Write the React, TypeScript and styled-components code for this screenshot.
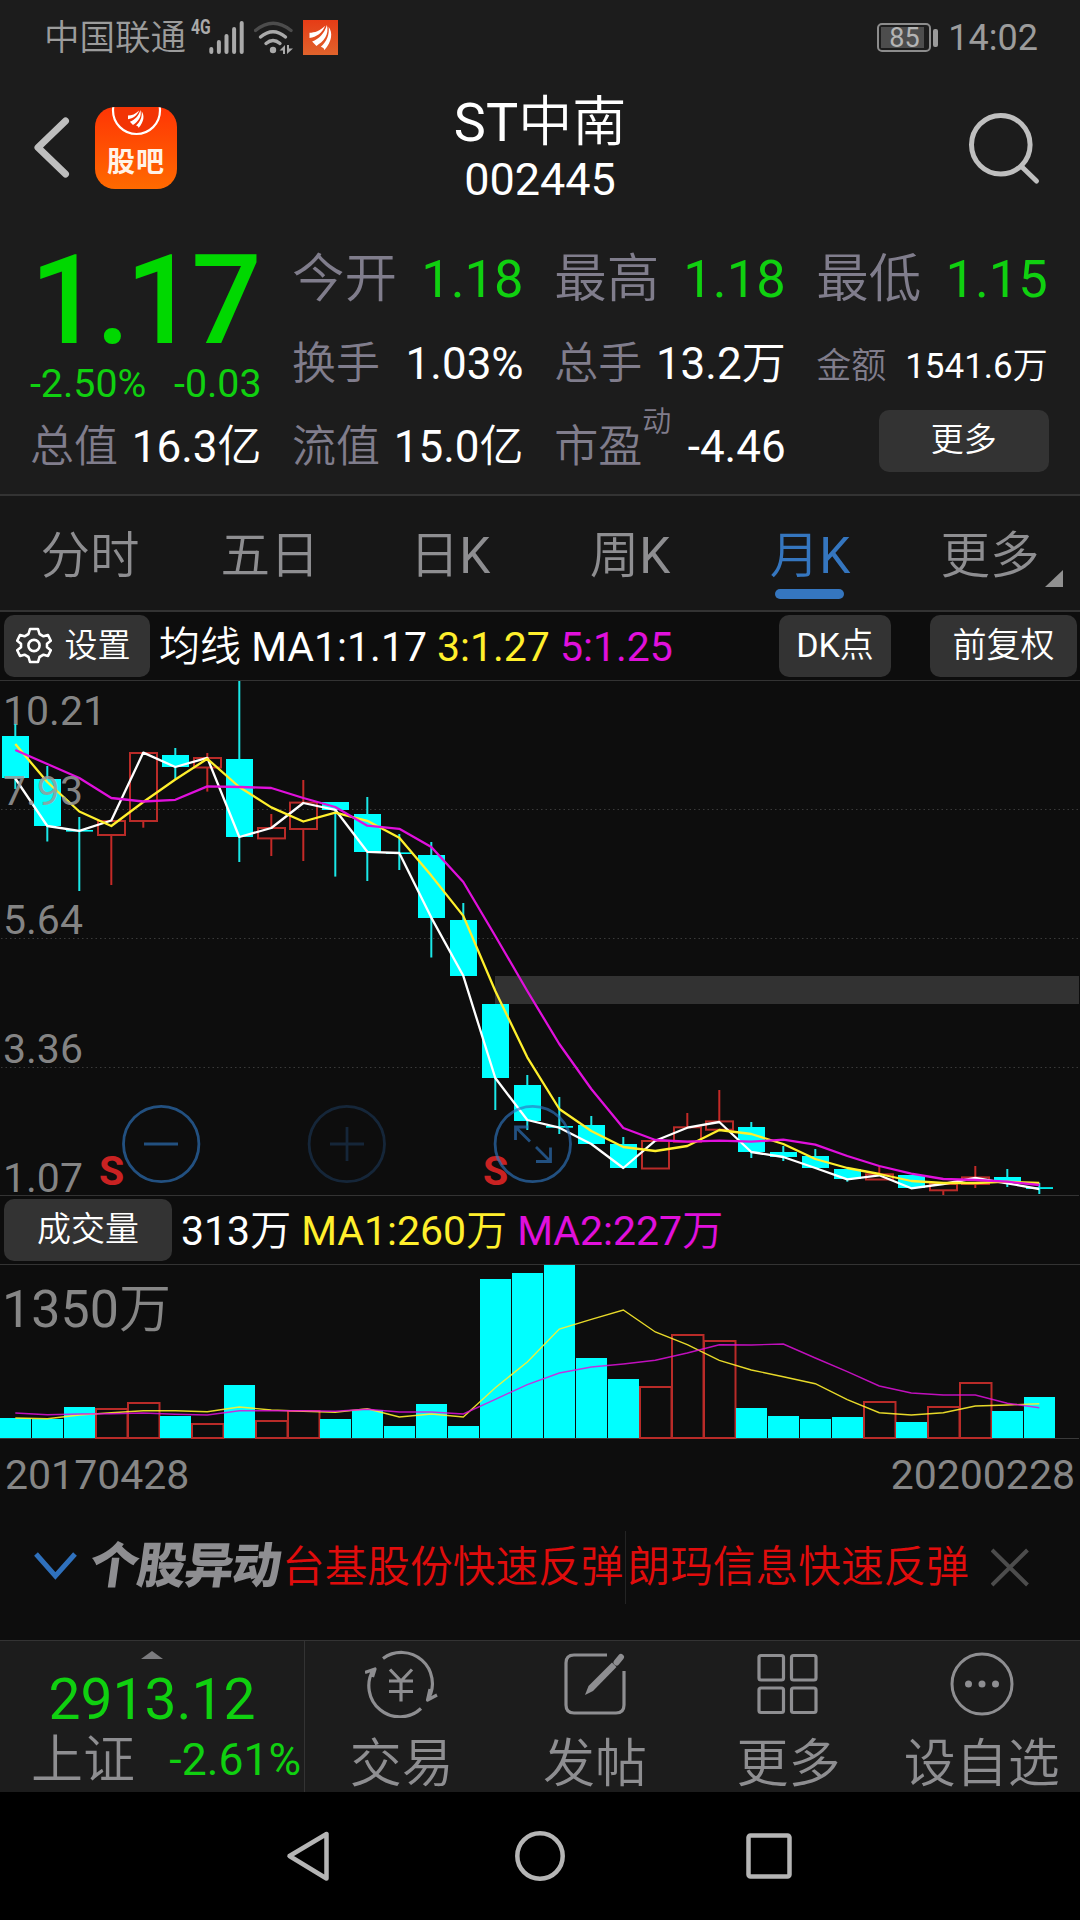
import React from "react";
import styled, { createGlobalStyle } from "styled-components";

const GlobalStyle = createGlobalStyle`
  html, body { margin: 0; padding: 0; background: #000; }
  body { width: 1080px; overflow-x: hidden; }
  * { box-sizing: border-box; }
  svg { display: block; flex: none; }
`;

const color = {
  panel: "#1c1c1c",
  tabs: "#171717",
  chart: "#0d0d0d",
  line: "#333333",
  button: "#333333",
  label: "#807d8c",
  muted: "#8e8e91",
  green: "#10d010",
  price: "#00d800",
  blue: "#3576bf",
  cyan: "#00ffff",
  red: "#b92b28",
  yellow: "#ffef2c",
  magenta: "#e010dc",
};

const Page = styled.main`
  width: 1080px;
  height: 1920px;
  display: flex;
  flex-direction: column;
  overflow: hidden;
  background: ${color.chart};
  color: #fff;
  font-family: Roboto, "Noto Sans CJK SC", sans-serif;
  white-space: nowrap;
`;

const Han = styled.span`
  font-weight: 350;
`;

/* ---------- status bar ---------- */

const StatusBar = styled.header`
  height: 75px;
  padding: 0 42px 0 44px;
  display: flex;
  align-items: center;
  background: ${color.panel};
  color: #9c9c9c;
`;

const Carrier = styled(Han)`
  width: 147px;
  font-size: 35.5px;
  line-height: 73px;
  padding-top: 2px;
`;

const Network = styled.span`
  align-self: flex-start;
  width: 17px;
  margin-top: 16px;
  font: 700 20px/22px Roboto, sans-serif;
  transform: scaleX(0.78);
  transform-origin: 0 0;
  color: #aaa;
`;

const StatusIcons = styled.div`
  display: flex;
  gap: 9px;
  margin-left: 1px;
`;

const Battery = styled.div`
  display: flex;
  align-items: center;
  gap: 2px;
  margin-left: auto;
`;

const BatteryCase = styled.div`
  width: 54px;
  height: 29px;
  padding: 2px;
  border: 2px solid #8c8c8c;
  border-radius: 5px;
`;

const BatteryLevel = styled.div`
  width: 43px;
  height: 21px;
  padding-left: 8px;
  background: #4d4d4d;
  color: #b4b4b4;
  font-size: 27px;
  line-height: 22px;
`;

const BatteryTip = styled.div`
  width: 5px;
  height: 18px;
  border-radius: 2px;
  background: #9a9a9a;
`;

const Clock = styled.time`
  margin-left: 10px;
  font-size: 36px;
  line-height: 73px;
  padding-top: 2px;
`;

/* ---------- title bar ---------- */

const TitleBar = styled.section`
  height: 150px;
  padding: 15px 36px 0 33px;
  display: grid;
  grid-template-columns: 200px 1fr 200px;
  align-items: start;
  background: ${color.panel};
`;

const TitleLeft = styled.div`
  display: flex;
  align-items: flex-start;
  gap: 24px;
  padding-top: 17px;
`;

const GubaBadge = styled.div`
  width: 82px;
  height: 82px;
  border-radius: 20px;
  overflow: hidden;
  display: flex;
  flex-direction: column;
  align-items: center;
  background: linear-gradient(#ff3505, #ff6a00);
`;

const GubaText = styled.span`
  margin-top: 7px;
  font-size: 28px;
  font-weight: 700;
  line-height: 34px;
  letter-spacing: 1px;
  color: #fff3e8;
`;

const TitleText = styled.div`
  display: flex;
  flex-direction: column;
  align-items: center;
  padding: 1px 0 0 3px;
`;

const StockName = styled.h1`
  margin: 0;
  font-size: 54px;
  font-weight: 400;
  line-height: 64px;
`;

const StockCode = styled.div`
  font-size: 45px;
  line-height: 50px;
`;

const SearchSlot = styled.div`
  display: flex;
  justify-content: flex-end;
  padding: 20px 3px 0 0;
`;

/* ---------- quote ---------- */

const Quote = styled.section`
  height: 271px;
  padding: 15px 32px 0 30px;
  display: grid;
  grid-template-columns: repeat(4, 231.5px);
  grid-template-rows: 82px 83px 80px;
  column-gap: 30.6px;
  background: ${color.panel};
  border-bottom: 2px solid ${color.line};
`;

const PriceCell = styled.div`
  grid-row: span 2;
  display: flex;
  flex-direction: column;
`;

const Price = styled.div`
  height: 116px;
  font-size: 124px;
  font-weight: 500;
  line-height: 122px;
  letter-spacing: -4.7px;
  color: ${color.price};
`;

const Change = styled.div`
  display: flex;
  justify-content: space-between;
  font-size: 39.3px;
  line-height: 56px;
  color: ${color.green};
`;

const Stat = styled.div<{ $size: number }>`
  display: flex;
  justify-content: space-between;
  font-size: ${(p) => p.$size}px;
  line-height: ${(p) => (p.$size === 35 ? 90 : p.$size > 50 ? 78 : 84)}px;
`;

const StatLabel = styled(Han)`
  color: ${color.label};
`;

const StatNote = styled.sup`
  font-size: 29px;
  line-height: 0;
  vertical-align: 30px;
`;

const StatValue = styled.span<{ $green?: boolean }>`
  color: ${(p) => (p.$green ? color.green : "#fff")};
`;

const MoreButton = styled.button`
  justify-self: end;
  width: 170px;
  height: 62px;
  margin: 5px -1px 0 0;
  padding: 0 0 2px;
  border: 0;
  border-radius: 10px;
  background: ${color.button};
  color: #fff;
  font: 350 33px/60px Roboto, "Noto Sans CJK SC", sans-serif;
`;

/* ---------- period tabs ---------- */

const Tabs = styled.nav`
  height: 116px;
  display: grid;
  grid-template-columns: repeat(6, 180px);
  background: ${color.tabs};
  border-bottom: 2px solid ${color.line};
`;

const Tab = styled.div<{ $active?: boolean }>`
  position: relative;
  display: flex;
  justify-content: center;
  font-size: 49.5px;
  line-height: 121px;
  color: ${(p) => (p.$active ? color.blue : color.muted)};
  &::after {
    content: "";
    display: ${(p) => (p.$active ? "block" : "none")};
    position: absolute;
    left: 55px;
    top: 93px;
    width: 69px;
    height: 10px;
    border-radius: 5px;
    background: ${color.blue};
  }
`;

const TabCorner = styled.i`
  position: absolute;
  right: 17px;
  top: 74px;
  border-left: 18px solid transparent;
  border-bottom: 17px solid #919191;
`;

/* ---------- indicator rows ---------- */

const IndicatorRow = styled.div`
  height: 69px;
  padding: 0 3px 0 4px;
  display: flex;
  align-items: center;
  border-bottom: 1px solid ${color.line};
  font-size: 41px;
`;

const Chip = styled.button<{ $w: number; $ml?: number }>`
  width: ${(p) => p.$w}px;
  height: 62px;
  margin-left: ${(p) => p.$ml ?? 0}px;
  padding: 0 0 1px;
  display: flex;
  align-items: center;
  justify-content: center;
  flex: none;
  border: 0;
  border-radius: 10px;
  background: ${color.button};
  color: #fff;
  font: 400 34px/61px Roboto, "Noto Sans CJK SC", sans-serif;
`;

const SettingsChip = styled(Chip)`
  justify-content: flex-start;
  gap: 12.5px;
  padding-left: 12px;
  font-size: 33px;
`;

const Legend = styled.div`
  display: flex;
  gap: 10px;
  margin-left: 9px;
  line-height: 68px;
  padding-top: 2px;
`;

const LegendItem = styled.span<{ $c?: string }>`
  color: ${(p) => p.$c ?? "#fff"};
`;

const Spacer = styled.div`
  flex: 1;
`;

const Dates = styled.div`
  height: 72px;
  padding: 0 5px 0 5px;
  display: flex;
  justify-content: space-between;
  font-size: 41px;
  line-height: 72px;
  color: #868686;
`;

/* ---------- ticker ---------- */

const Ticker = styled.section`
  height: 129px;
  padding: 20px 51px 0 33px;
  display: flex;
  align-items: flex-start;
`;

const TickerChevron = styled.div`
  padding-top: 18px;
`;

const TickerLogo = styled.span`
  width: 205px;
  padding-left: 13px;
  font-size: 49px;
  font-weight: 900;
  line-height: 72px;
  letter-spacing: -1.5px;
  color: ${color.muted};
  transform: skewX(-8deg);
`;

const TickerItem = styled(Han)`
  font-size: 42.7px;
  line-height: 73px;
  color: #e00c0c;
  & + & {
    margin-left: 1px;
    padding-left: 2px;
    border-left: 1px solid #242424;
  }
`;

const TickerClose = styled.div`
  margin-left: auto;
  padding-top: 16px;
`;

/* ---------- footer ---------- */

const Footer = styled.footer`
  height: 152px;
  display: grid;
  grid-template-columns: 305px repeat(4, 193.4px);
  background: ${color.panel};
  border-top: 1px solid ${color.line};
`;

const IndexCell = styled.div`
  display: flex;
  flex-direction: column;
  align-items: center;
  padding-top: 10px;
  border-right: 1px solid ${color.line};
`;

const UpMark = styled.i`
  border: 11px solid transparent;
  border-top: 0;
  border-bottom: 8px solid #7b7b7e;
`;

const IndexValue = styled.div`
  font-size: 57px;
  line-height: 82px;
  color: ${color.green};
`;

const IndexRow = styled.div`
  align-self: stretch;
  display: flex;
  justify-content: space-between;
  padding: 0 3px 0 31px;
  line-height: 38px;
  font-size: 44.5px;
  color: ${color.green};
`;

const IndexName = styled(Han)`
  padding-top: 1px;
  font-size: 52px;
  color: ${color.muted};
`;

const Action = styled.div`
  display: flex;
  flex-direction: column;
  align-items: center;
  padding-top: 9px;
`;

const ActionText = styled(Han)`
  font-size: 52px;
  line-height: 84px;
  padding-top: 5px;
  color: ${color.muted};
`;

const SystemNav = styled.nav`
  height: 128px;
  padding: 0 285px 0 284px;
  display: flex;
  align-items: center;
  justify-content: space-between;
  background: #000;
`;

const HomeButton = styled.div`
  padding-left: 6px;
`;

/* ---------- data ---------- */

type Candle = [up: 0 | 1, high: number, top: number, bottom: number, low: number];

const candles: Candle[] = [
  [0, 724, 736, 778, 789], [0, 766, 779, 826, 841.5], [0, 817, 830, 831.6, 891],
  [1, 820.5, 821, 835, 885], [1, 753, 753, 821, 827.7], [0, 748, 755, 767, 779.5],
  [1, 753, 758, 767.5, 791.6], [0, 680, 759, 837, 862], [1, 814, 828, 838.4, 856],
  [1, 780, 802.6, 829, 861], [0, 802, 802, 810, 876.6], [0, 797, 814, 852, 881],
  [0, 834, 852.4, 854, 870], [0, 842, 855, 918, 957.5], [0, 903, 920, 976, 976],
  [0, 1004, 1004, 1078, 1110], [0, 1075, 1085, 1121, 1130], [0, 1097, 1126, 1127.7, 1134],
  [0, 1116, 1125, 1144, 1144], [0, 1137, 1144, 1168, 1168], [1, 1141, 1141, 1168.5, 1168.5],
  [1, 1113, 1127.3, 1141.7, 1141.7], [1, 1090, 1121.4, 1129.7, 1129.7], [0, 1122, 1127, 1152, 1158],
  [0, 1146, 1152, 1157, 1161], [0, 1149, 1156, 1168, 1168], [0, 1169, 1169, 1179, 1181.7],
  [1, 1166.7, 1174.3, 1179.5, 1180], [0, 1175, 1175, 1188, 1188], [1, 1184, 1184, 1190.3, 1195],
  [1, 1166, 1177.4, 1184, 1188], [0, 1169, 1177, 1182, 1187], [0, 1183, 1187.2, 1188.9, 1194],
];

const ma1 = [778.5, 826, 830.8, 820.5, 752.6, 767, 757.8, 837, 828, 803, 809.8, 851.8, 853, 917.6, 975.8, 1078, 1120, 1127.7, 1144, 1168, 1140.7, 1127.7, 1122, 1152, 1157, 1168, 1179.3, 1175.3, 1188.3, 1184, 1178, 1183.3, 1189];
const ma3 = [744, 782, 811.5, 826, 802, 779.5, 758.8, 787, 807.4, 821.5, 812.6, 820.8, 837.7, 875.6, 915.9, 991, 1057.3, 1109, 1131, 1147, 1151, 1146, 1130, 1134, 1144, 1159, 1168, 1174, 1181, 1183, 1183, 1181.7, 1183];
const ma5 = [750, 764, 778, 798, 801.5, 799.8, 786.4, 787, 788, 798, 807, 825.7, 828.8, 847, 882, 936, 991, 1044, 1089, 1128, 1140, 1141.7, 1140.7, 1141.7, 1139.7, 1144.7, 1156, 1166, 1173.7, 1179, 1180, 1181.7, 1185];

const volumeTops = [1418, 1419, 1407, 1409, 1403, 1416, 1424, 1385, 1421, 1411, 1419, 1410, 1426, 1404, 1426, 1279, 1273, 1264, 1358, 1379, 1387, 1335, 1341, 1408, 1416, 1419, 1417, 1402, 1422, 1407, 1383, 1411, 1397];
const volumeMa1 = [1418, 1418.7, 1415, 1412.7, 1410.7, 1410.7, 1411.7, 1407, 1410, 1411.3, 1412.3, 1408.7, 1417, 1414, 1417, 1387.7, 1362, 1329, 1319.3, 1310, 1332, 1344.7, 1360.3, 1370, 1376.7, 1383.7, 1399.7, 1412.7, 1415, 1412.7, 1406, 1405, 1403.7];
const volumeMa2 = [1413, 1414.7, 1414, 1413.7, 1413, 1414.3, 1415, 1410.7, 1410.7, 1410.7, 1411.3, 1409.3, 1412, 1412, 1414, 1399.3, 1384.7, 1373, 1367, 1364, 1360.3, 1353, 1344.7, 1345, 1344, 1358, 1371.7, 1386, 1393, 1395, 1395, 1403.3, 1407.7];

const axis: [string, number][] = [["10.21", 725], ["7.93", 804.5], ["5.64", 934], ["3.36", 1063], ["1.07", 1192]];

const centerX = (i: number) => 15.3 + 32 * i;
const toPoints = (ys: number[]) => ys.map((y, i) => `${centerX(i)},${y}`).join(" ");

/* ---------- drawings ---------- */

const Wing = () => (
  <g fill="#fff">
    <path d="M0 9C6 9 12 7 18 1C15 9 8 14 0 15Z" />
    <path d="M3 19C11 16 17 10 20 0C23 11 16 19 8 24Z" />
    <path d="M13 25C20 19 23 11 22 2C27 9 26 19 17 29C17 27 16 26 13 25Z" />
  </g>
);

const Signal = () => (
  <svg width="36" height="36" viewBox="210 18 36 36">
    <g stroke="#aaaaaa" strokeWidth="4" strokeLinecap="round">
      {[47, 40, 34, 27, 21].map((y, i) => (
        <line key={y} x1={212.3 + i * 7.6} x2={212.3 + i * 7.6} y1={y} y2="50" />
      ))}
    </g>
  </svg>
);

const Wifi = () => (
  <svg width="40" height="36" viewBox="255 18 40 36" fill="none" strokeWidth="3.4" strokeLinecap="round">
    <path d="M256.5 28.5Q274 14 292 28.5" stroke="#4c4c4c" />
    <path d="M261.5 35Q274 24.5 286.5 35" stroke="#aaa" />
    <path d="M267 41.5Q274 35.5 281 41.5" stroke="#aaa" />
    <circle cx="274" cy="48" r="3.2" fill="#aaa" />
    <path d="M280.5 48.5L286 43V52H284V48.5ZM288 43H290V46.5H294L288 52Z" fill="#aaa" />
  </svg>
);

const AppIcon = () => (
  <svg width="35" height="35" viewBox="0 0 35 35">
    <defs>
      <linearGradient id="appFill" x1="0" y1="0" x2="0" y2="1">
        <stop offset="0" stopColor="#e63c16" />
        <stop offset="1" stopColor="#e0632c" />
      </linearGradient>
    </defs>
    <rect width="35" height="35" fill="url(#appFill)" />
    <g transform="translate(6.5 5) scale(.87)"><Wing /></g>
  </svg>
);

const Gear = () => (
  <svg width="36" height="37" viewBox="-18 -18.5 36 37" fill="none" stroke="#fff" strokeWidth="2.6" strokeLinejoin="round">
    <path d="M-4 -16.5H4L5.5 -11.5L9.5 -9.2L14 -10.5L16.8 -4.8L13 -1.8V1.8L16.8 4.8L14 10.5L9.5 9.2L5.5 11.5L4 16.5H-4L-5.5 11.5L-9.5 9.2L-14 10.5L-16.8 4.8L-13 1.8V-1.8L-16.8 -4.8L-14 -10.5L-9.5 -9.2L-5.5 -11.5Z" />
    <circle r="5.6" />
  </svg>
);

const TradeIcon = () => (
  <svg width="74" height="68" viewBox="-36 -34 74 68" fill="none" stroke={color.muted} strokeWidth="3.2" strokeLinejoin="round">
    <path d="M-18 -25.5A31 31 0 0 1 27.500 14.500M36 11L26.500 16L29 5" />
    <path d="M20 24.500A31 31 0 0 1 -27.500 -14.500M-36 -11.500L-26 -15L-28.500 -7" />
    <path d="M-11 -14.5L0 -3L11 -14.5M0 -3V17.5M-12 -3H12M-12 7.5H12" />
  </svg>
);

const PostIcon = () => (
  <svg width="68" height="68" viewBox="-34 -34 68 68" fill="none" stroke={color.muted} strokeWidth="3.2">
    <path d="M12 -29H-21Q-29 -29 -29 -21V21Q-29 29 -21 29H21Q29 29 29 21V-13" />
    <path d="M-10 11L-6.5 2L17 -21.5L21.5 -17L-2 7Z" fill={color.muted} stroke="none" />
    <path d="M21.5 -21.5L26 -27" strokeWidth="6" strokeLinecap="round" />
  </svg>
);

const GridIcon = () => (
  <svg width="68" height="68" viewBox="-34 -34 68 68" fill="none" stroke={color.muted} strokeWidth="3.2">
    {[-29, 3.5].map((x) => [-28.5, 4].map((y) => <rect key={`${x}${y}`} x={x} y={y} width="24.5" height="24.5" rx="2" />))}
  </svg>
);

const DotsIcon = () => (
  <svg width="68" height="68" viewBox="-34 -34 68 68" fill="none" stroke={color.muted} strokeWidth="3">
    <circle r="30" />
    <g fill={color.muted} stroke="none">
      <circle cx="-13.5" r="3.5" /><circle r="3.5" /><circle cx="13.5" r="3.5" />
    </g>
  </svg>
);

const PriceChart = () => (
  <svg width="1080" height="515" viewBox="0 681 1080 515">
    <g stroke="#3a3a3a" strokeDasharray="1.5 3">
      {[809.5, 938.5, 1067.5].map((y) => <line key={y} x1="1" x2="1079" y1={y} y2={y} />)}
    </g>
    <line x1="0" x2="1079" y1="1195.5" y2="1195.5" stroke={color.line} />
    <rect x="495" y="976" width="584" height="28" fill="#323232" />
    <g fontFamily="Roboto, sans-serif" fontSize="41" fill="#9b9b9b" fillOpacity=".85">
      {axis.filter(([t]) => t !== "7.93").map(([t, y]) => <text key={t} x="3" y={y}>{t}</text>)}
    </g>
    {candles.map(([up, high, top, bottom, low], i) => {
      const x = centerX(i);
      const ink = up ? "#c42a27" : "#1ae8e8";
      return (
        <g key={i}>
          {high < top && <line x1={x} x2={x} y1={high} y2={top} stroke={ink} strokeWidth="2" />}
          {low > bottom && <line x1={x} x2={x} y1={bottom} y2={low} stroke={ink} strokeWidth="2" />}
          {up ? (
            <rect x={x - 13.3} y={top} width="27" height={bottom - top} fill="none" stroke={color.red} strokeWidth="2" />
          ) : (
            <rect x={x - 13.3} y={top} width="27" height={bottom - top} fill={color.cyan} />
          )}
        </g>
      );
    })}
    <g fill="none" strokeWidth="2.3" strokeLinejoin="round">
      <polyline points={toPoints(ma1)} stroke="#fff" />
      <polyline points={toPoints(ma3)} stroke={color.yellow} />
      <polyline points={toPoints(ma5)} stroke={color.magenta} />
    </g>
    <text x="3" y="804.5" fontFamily="Roboto, sans-serif" fontSize="41" fill="#9b9b9b" fillOpacity=".85">7.93</text>
    <g fontFamily="Roboto, sans-serif" fontSize="41" fontWeight="700" fill="#c92222">
      <text x="99" y="1184.5">S</text>
      <text x="483" y="1184.5">S</text>
    </g>
    <g fill="none" strokeWidth="2.8" stroke="#2e75be" strokeOpacity=".65">
      <circle cx="161.2" cy="1144" r="37.7" />
      <path d="M144 1144H178" />
      <g strokeOpacity=".25">
        <circle cx="346.8" cy="1144" r="37.7" />
        <path d="M330 1144H364M347 1127V1161" />
      </g>
      <circle cx="532.8" cy="1144" r="37.7" />
      <path d="M515.5 1140V1127H528.5M515.5 1127L530 1141.5M536 1147L550.5 1161.5M550.5 1147.5V1161.5H536" />
    </g>
  </svg>
);

const VolumeChart = () => (
  <svg width="1080" height="174" viewBox="0 1265 1080 174">
    <line x1="0" x2="1079" y1="1438.5" y2="1438.5" stroke="#3a3a3a" />
    {volumeTops.map((top, i) =>
      candles[i][0] ? (
        <rect key={i} x={32 * i} y={top} width="31.5" height={1438 - top} fill="none" stroke={color.red} strokeWidth="2" />
      ) : (
        <rect key={i} x={32 * i} y={top} width="31" height={1438 - top} fill={color.cyan} />
      )
    )}
    <text x="2" y="1327" fontFamily='Roboto, "Noto Sans CJK SC", sans-serif' fontSize="52" fill="#868686">
      1350<tspan fontWeight="350">万</tspan>
    </text>
    <g fill="none" strokeWidth="1.4">
      <polyline points={toPoints(volumeMa1)} stroke={color.yellow} strokeOpacity=".9" />
      <polyline points={toPoints(volumeMa2)} stroke={color.magenta} strokeOpacity=".85" />
    </g>
  </svg>
);

/* ---------- screen ---------- */

type StatProps = { label: string; value: string; han?: string; size?: number; green?: boolean; note?: string };

const StatCell = ({ label, value, han, size = 44, green, note }: StatProps) => (
  <Stat $size={size}>
    <StatLabel>{label}{note && <StatNote>{note}</StatNote>}</StatLabel>
    <StatValue $green={green}>{value}{han && <Han>{han}</Han>}</StatValue>
  </Stat>
);

const tabs = [["分时", ""], ["五日", ""], ["日", "K"], ["周", "K"], ["月", "K"], ["更多", ""]];

export default function App() {
  return (
    <>
      <GlobalStyle />
      <Page>
        <StatusBar>
          <Carrier>中国联通</Carrier>
          <Network>4G</Network>
          <StatusIcons><Signal /><Wifi /><AppIcon /></StatusIcons>
          <Battery>
            <BatteryCase><BatteryLevel>85</BatteryLevel></BatteryCase>
            <BatteryTip />
          </Battery>
          <Clock>14:02</Clock>
        </StatusBar>

        <TitleBar>
          <TitleLeft>
            <svg width="38" height="82" viewBox="33 107 38 82" fill="none" stroke="#bebebe" strokeWidth="7" strokeLinecap="round" strokeLinejoin="round">
              <path d="M65.5 121L38 147.5L65.5 174" />
            </svg>
            <GubaBadge>
              <svg width="82" height="32" viewBox="0 0 82 32">
                <circle cx="41.5" cy="3.5" r="23.5" fill="#f23405" stroke="#fff" strokeWidth="2.2" />
                <g transform="translate(33 3) scale(.62)"><Wing /></g>
              </svg>
              <GubaText>股吧</GubaText>
            </GubaBadge>
          </TitleLeft>
          <TitleText>
            <StockName>ST<Han>中南</Han></StockName>
            <StockCode>002445</StockCode>
          </TitleText>
          <SearchSlot>
            <svg width="74" height="78" viewBox="967 110 74 78" fill="none" stroke="#bfbfbf" strokeWidth="5" strokeLinecap="round">
              <circle cx="1000.8" cy="144.7" r="29.3" />
              <path d="M1022 167L1036.5 181" />
            </svg>
          </SearchSlot>
        </TitleBar>

        <Quote>
          <PriceCell>
            <Price>1.17</Price>
            <Change><span>-2.50%</span><span>-0.03</span></Change>
          </PriceCell>
          <StatCell label="今开" value="1.18" size={52.5} green />
          <StatCell label="最高" value="1.18" size={52.5} green />
          <StatCell label="最低" value="1.15" size={52.5} green />
          <StatCell label="换手" value="1.03%" />
          <StatCell label="总手" value="13.2" han="万" />
          <StatCell label="金额" value="1541.6" han="万" size={35} />
          <StatCell label="总值" value="16.3" han="亿" />
          <StatCell label="流值" value="15.0" han="亿" />
          <StatCell label="市盈" value="-4.46" note="动" />
          <MoreButton>更多</MoreButton>
        </Quote>

        <Tabs>
          {tabs.map(([han, latin], i) => (
            <Tab key={han} $active={i === 4}>
              <Han>{han}</Han>{latin}
              {i === 5 && <TabCorner />}
            </Tab>
          ))}
        </Tabs>

        <IndicatorRow>
          <SettingsChip $w={146}><Gear /><Han>设置</Han></SettingsChip>
          <Legend>
            <LegendItem><Han>均线</Han> MA1:1.17</LegendItem>
            <LegendItem $c={color.yellow}>3:1.27</LegendItem>
            <LegendItem $c={color.magenta}>5:1.25</LegendItem>
          </Legend>
          <Spacer />
          <Chip $w={112}><span>DK<Han>点</Han></span></Chip>
          <Chip $w={147} $ml={39}><Han>前复权</Han></Chip>
        </IndicatorRow>
        <PriceChart />
        <IndicatorRow>
          <Chip $w={168}><Han>成交量</Han></Chip>
          <Legend>
            <LegendItem>313<Han>万</Han></LegendItem>
            <LegendItem $c={color.yellow}>MA1:260<Han>万</Han></LegendItem>
            <LegendItem $c={color.magenta}>MA2:227<Han>万</Han></LegendItem>
          </Legend>
        </IndicatorRow>
        <VolumeChart />
        <Dates><span>20170428</span><span>20200228</span></Dates>

        <Ticker>
          <TickerChevron>
            <svg width="44" height="32" viewBox="33 1549 44 32" fill="none" stroke="#2f71bd" strokeWidth="5">
              <path d="M36 1554L55.4 1576L75 1554" />
            </svg>
          </TickerChevron>
          <TickerLogo>个股异动</TickerLogo>
          <TickerItem>台基股份快速反弹</TickerItem>
          <TickerItem>朗玛信息快速反弹</TickerItem>
          <TickerClose>
            <svg width="38" height="40" viewBox="991 1545 38 40" fill="none" stroke="#4c4c4c" strokeWidth="4">
              <path d="M992 1548L1027.5 1583M1027.5 1548L992 1583" />
            </svg>
          </TickerClose>
        </Ticker>

        <Footer>
          <IndexCell>
            <UpMark />
            <IndexValue>2913.12</IndexValue>
            <IndexRow><IndexName>上证</IndexName><span>-2.61%</span></IndexRow>
          </IndexCell>
          <Action><TradeIcon /><ActionText>交易</ActionText></Action>
          <Action><PostIcon /><ActionText>发帖</ActionText></Action>
          <Action><GridIcon /><ActionText>更多</ActionText></Action>
          <Action><DotsIcon /><ActionText>设自选</ActionText></Action>
        </Footer>

        <SystemNav>
          <svg width="46" height="54" viewBox="285 1829 46 54" fill="none" stroke="#b5b5b5" strokeWidth="4.5" strokeLinejoin="round">
            <path d="M290.5 1856L327.5 1834V1878.5Z" />
          </svg>
          <HomeButton>
            <svg width="52" height="54" viewBox="-26 -27 52 54" fill="none" stroke="#b5b5b5" strokeWidth="4.5">
              <circle r="22.7" />
            </svg>
          </HomeButton>
          <svg width="52" height="54" viewBox="-26 -27 52 54" fill="none" stroke="#b5b5b5" strokeWidth="4.5">
            <rect x="-20.5" y="-20.5" width="41" height="41" rx="2" />
          </svg>
        </SystemNav>
      </Page>
    </>
  );
}
